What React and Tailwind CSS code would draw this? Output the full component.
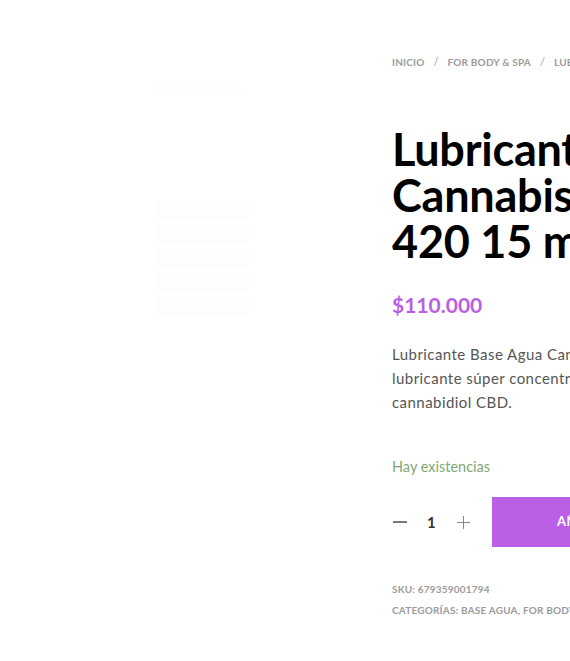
import React from 'react';

const Crumb = ({ children }) => (
  <span className="text-[10px] font-bold uppercase tracking-[0.02em] text-[#9b9b9b]">{children}</span>
);

const Sep = () => <span className="mx-[9px] text-[11px] text-[#9b9b9b]">/</span>;

export default function App() {
  return (
    <div className="w-[570px] h-[661px] overflow-hidden bg-white flex font-['Lato',sans-serif]">
      {/* product image (very faint on white) */}
      <div className="w-[392px] shrink-0 pt-[86px] pl-[157px]">
        <div className="w-[92px] flex flex-col gap-[4px]">
          <div className="h-[3px] w-[80px] bg-[#fefefe]" />
          <div className="h-[3px] w-[86px] bg-[#fefefe]" />
        </div>
        <div className="mt-[104px] w-[92px] flex flex-col gap-[6px]">
          <div className="h-[18px] bg-[#fdfdfd]" />
          <div className="h-[18px] bg-[#fdfdfd]" />
          <div className="h-[18px] bg-[#fdfdfd]" />
          <div className="h-[18px] bg-[#fdfdfd]" />
          <div className="h-[18px] bg-[#fdfdfd]" />
        </div>
      </div>

      {/* product summary */}
      <div className="w-[420px] shrink-0 pt-[54px] whitespace-nowrap">
        <div className="flex items-center h-[16px]">
          <Crumb>Inicio</Crumb>
          <Sep />
          <Crumb>For Body &amp; Spa</Crumb>
          <Sep />
          <Crumb>Lubricantes</Crumb>
        </div>

        <h1 className="mt-[56px] text-[45px] leading-[46px] font-bold text-black tracking-[-0.005em]">
          <span className="block">Lubricante</span>
          <span className="block">Cannabis Sativa</span>
          <span className="block">420 15 ml</span>
        </h1>

        <div className="mt-[28px] text-[21px] leading-[26px] font-bold text-[#b95fe5]">$110.000</div>

        <div className="mt-[24px] text-[15px] leading-[24px] tracking-[0.03em] text-[#555555]">
          <p>Lubricante Base Agua Cannabis Sativa 420 es un</p>
          <p>lubricante súper concentrado con aceite de</p>
          <p>cannabidiol CBD.</p>
        </div>

        <p className="mt-[43px] text-[14.5px] leading-[20px] text-[#7fa774]">Hay existencias</p>

        <div className="mt-[20px] flex items-center h-[50px]">
          <div className="flex items-center w-[100px]">
            <div className="w-[14px] h-[1.5px] bg-[#777777] ml-[1px]" />
            <span className="ml-[20px] text-[15px] font-bold text-[#333333]">1</span>
            <div className="relative ml-[21px] w-[13px] h-[13px]">
              <div className="absolute left-0 right-0 top-[6px] h-[1.5px] bg-[#888888]" />
              <div className="absolute top-0 bottom-0 left-[6px] w-[1.5px] bg-[#888888]" />
            </div>
          </div>
          <button className="h-[50px] bg-[#bb5fe6] pl-[65px] pr-[40px] text-[13px] font-bold uppercase tracking-[0.04em] text-white">
            Añadir al carrito
          </button>
        </div>

        <div className="mt-[32px] text-[10px] leading-[21px] font-bold uppercase tracking-[0.02em] text-[#9b9b9b]">
          <p>SKU: 679359001794</p>
          <p>Categorías: Base Agua, For Body &amp; Spa</p>
        </div>
      </div>
    </div>
  );
}
